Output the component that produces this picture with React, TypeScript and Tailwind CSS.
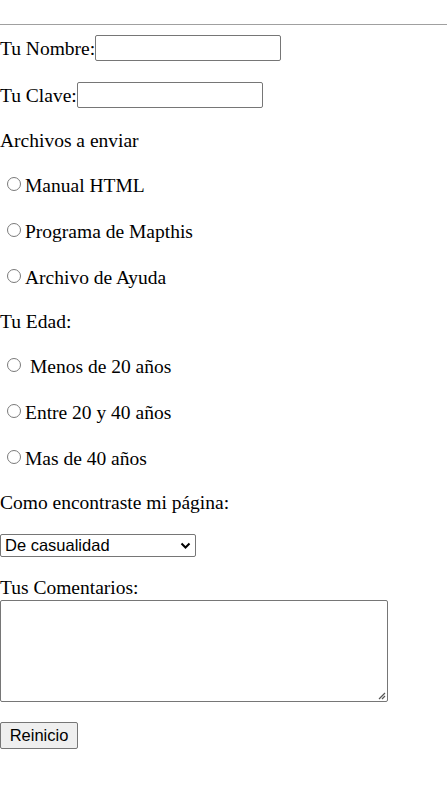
import React from "react";

const serif = "font-['Liberation_Serif','Times_New_Roman',serif]";

function Radio() {
  return (
    <span className="inline-block w-[14px] h-[14px] rounded-full border border-[#7a7a7a] bg-white ml-[7px] mr-[4px] mb-[4px] shrink-0" />
  );
}

export default function App() {
  return (
    <div className={`${serif} text-[19.5px] text-black bg-white w-[447px] h-[803px] leading-none`}>
      <div className="h-[24px]" />
      <div className="border-t border-[#a0a0a0]" />
      <div className="mt-[10px] h-[26px] flex items-center pt-[1px]">
        <span>Tu Nombre:</span>
        <span className="inline-block w-[186px] h-[26px] border border-[#767676] rounded-[2px] -mt-[1px]" />
      </div>
      <div className="mt-[21px] h-[26px] flex items-center pt-[1px]">
        <span>Tu Clave:</span>
        <span className="inline-block w-[186px] h-[26px] border border-[#767676] rounded-[2px] -mt-[1px]" />
      </div>
      <div className="mt-[19px] h-[26px] flex items-center pt-[2px]">Archivos a enviar</div>
      <div className="mt-[19px] h-[26px] flex items-center pt-[2px]">
        <Radio />
        <span>Manual HTML</span>
      </div>
      <div className="mt-[20px] h-[26px] flex items-center pt-[2px]">
        <Radio />
        <span>Programa de Mapthis</span>
      </div>
      <div className="mt-[20px] h-[26px] flex items-center pt-[2px]">
        <Radio />
        <span>Archivo de Ayuda</span>
      </div>
      <div className="mt-[18px] h-[26px] flex items-center pt-[2px]">Tu Edad:</div>
      <div className="mt-[19px] h-[26px] flex items-center pt-[2px]">
        <Radio />
        <span className="ml-[5px]">Menos de 20 años</span>
      </div>
      <div className="mt-[20px] h-[26px] flex items-center pt-[2px]">
        <Radio />
        <span>Entre 20 y 40 años</span>
      </div>
      <div className="mt-[20px] h-[26px] flex items-center pt-[2px]">
        <Radio />
        <span>Mas de 40 años</span>
      </div>
      <div className="mt-[18px] h-[26px] flex items-center pt-[2px]">Como encontraste mi página:</div>
      <div className="mt-[19px] h-[23px] flex items-center">
        <div className="w-[196px] h-[23px] border border-[#767676] rounded-[2px] flex items-center justify-between pl-[4px] pr-[4px] font-['Liberation_Sans',Arial,sans-serif] text-[16.5px]">
          <span>De casualidad</span>
          <svg width="11" height="8" viewBox="0 0 11 8">
            <path d="M1.5 1.5 L5.5 5.5 L9.5 1.5" fill="none" stroke="#000" strokeWidth="2" />
          </svg>
        </div>
      </div>
      <div className="mt-[19px] h-[22px] flex items-center pt-[2px]">Tus Comentarios:</div>
      <div className="mt-[2px] relative w-[388px] h-[102px] border border-[#767676] rounded-[2px]">
        <svg className="absolute right-[1px] bottom-[1px]" width="10" height="10" viewBox="0 0 10 10">
          <path d="M9 3 L3 9 M9 6 L6 9" stroke="#555" strokeWidth="1.2" />
        </svg>
      </div>
      <div className="mt-[20px] w-[78px] h-[27px] border border-[#767676] rounded-[2px] bg-[#efefef] flex items-center justify-center font-['Liberation_Sans',Arial,sans-serif] text-[16.5px]">
        Reinicio
      </div>
    </div>
  );
}
